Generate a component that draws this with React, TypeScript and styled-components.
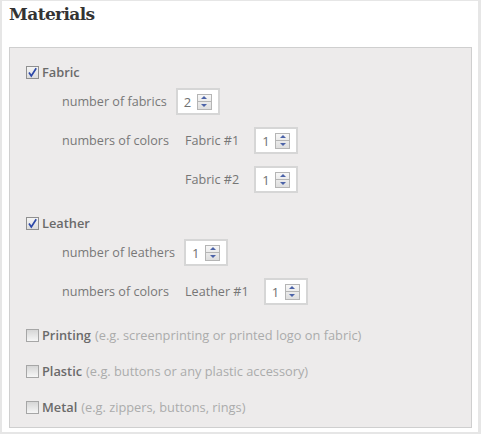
import React from 'react';
import styled, { createGlobalStyle } from 'styled-components';

const GlobalStyle = createGlobalStyle`
  html, body {
    margin: 0;
    padding: 0;
    background: #ffffff;
  }
  body {
    font-family: 'Open Sans', 'DejaVu Sans', sans-serif;
  }
`;

const Frame = styled.div`
  box-sizing: border-box;
  width: 481px;
  height: 434px;
  border: 2px solid #e6e6e6;
  border-top-width: 1px;
  border-right-width: 3px;
  background: #fff;
  padding: 0 6px 0 7px;
`;

const Title = styled.h2`
  margin: 0;
  padding-top: 3px;
  height: 46px;
  box-sizing: border-box;
  font-family: 'DejaVu Serif', 'Liberation Serif', serif;
  font-weight: bold;
  font-size: 17px;
  letter-spacing: -0.6px;
  color: #333;
`;

const Panel = styled.div`
  box-sizing: border-box;
  height: 381px;
  border: 1px solid #cfcfcf;
  background: #edebeb;
  padding: 16px 16px 0;
  display: flex;
  flex-direction: column;
  gap: 20px;
`;

const Section = styled.div<{ $extra?: number }>`
  display: flex;
  flex-direction: column;
  margin-bottom: ${p => p.$extra || 0}px;
`;

const CheckRow = styled.label`
  display: flex;
  align-items: center;
  height: 16px;
  font-size: 12.8px;
  color: #6c6c6c;
`;

const Box = styled.span<{ $checked?: boolean }>`
  box-sizing: border-box;
  width: 13px;
  height: 13px;
  margin-right: 3px;
  border: 1px solid ${p => (p.$checked ? '#8f8f8f' : '#a6a6a6')};
  background: ${p =>
    p.$checked ? 'linear-gradient(#f4f4f4, #dcdcdc)' : 'linear-gradient(#d6d6d6, #f6f6f6)'};
  display: flex;
  align-items: center;
  justify-content: center;
`;

const CheckName = styled.span`
  font-weight: 600;
  color: #6a6a6a;
`;

const Hint = styled.span`
  margin-left: 4px;
  color: #ababab;
`;

const SubList = styled.div`
  display: flex;
  flex-direction: column;
  gap: 12px;
  margin-top: 8px;
  padding-left: 36px;
`;

const SubRow = styled.div`
  display: flex;
  align-items: flex-start;
  font-size: 12.6px;
  color: #787878;
`;

const RowLabel = styled.span<{ $width?: number; $gap?: number }>`
  height: 27px;
  line-height: 27px;
  width: ${p => (p.$width ? `${p.$width}px` : 'auto')};
  margin-right: ${p => p.$gap || 0}px;
  flex: none;
`;

const ColorList = styled.div`
  display: flex;
  flex-direction: column;
  gap: 12px;
`;

const ColorItem = styled.div`
  display: flex;
  align-items: center;
`;

const ItemLabel = styled.span`
  margin-right: 15px;
  color: #767676;
`;

const NumberBox = styled.div`
  box-sizing: border-box;
  width: 44px;
  height: 27px;
  border: 2px solid #d6d6d6;
  background: #fff;
  display: flex;
  align-items: center;
  padding: 0 6px;
  justify-content: space-between;
  font-size: 13px;
`;

const Digit = styled.span`
  color: #707070;
`;

const Spinner = styled.div`
  box-sizing: border-box;
  width: 15px;
  height: 16px;
  border: 1px solid #b5b5b5;
  background: linear-gradient(#f7f7f7, #dedede);
  display: flex;
  flex-direction: column;
`;

const SpinHalf = styled.span<{ $bottom?: boolean }>`
  flex: 1;
  display: flex;
  align-items: center;
  justify-content: center;
  border-top: ${p => (p.$bottom ? '1px solid #b5b5b5' : 'none')};
`;

const Arrow = styled.span<{ $down?: boolean }>`
  width: 0;
  height: 0;
  border-left: 3px solid transparent;
  border-right: 3px solid transparent;
  ${p => (p.$down ? 'border-top: 3px solid #4c63a8;' : 'border-bottom: 3px solid #4c63a8;')}
`;

const CheckMark = () => (
  <svg width="11" height="11" viewBox="0 0 11 11">
    <path d="M2 5.5 L4.3 9 L9.2 1.3" fill="none" stroke="#2c48a8" strokeWidth="1.7" />
  </svg>
);

const Stepper = ({ value }: { value: number }) => (
  <NumberBox>
    <Digit>{value}</Digit>
    <Spinner>
      <SpinHalf>
        <Arrow />
      </SpinHalf>
      <SpinHalf $bottom>
        <Arrow $down />
      </SpinHalf>
    </Spinner>
  </NumberBox>
);

const Check = ({ name, hint, checked }: { name: string; hint?: string; checked?: boolean }) => (
  <CheckRow>
    <Box $checked={checked}>{checked && <CheckMark />}</Box>
    <CheckName>{name}</CheckName>
    {hint && <Hint>{hint}</Hint>}
  </CheckRow>
);

const MATERIALS = [
  { name: 'Fabric', plural: 'fabrics', count: 2 },
  { name: 'Leather', plural: 'leathers', count: 1 },
];

const EXTRAS = [
  { name: 'Printing', hint: '(e.g. screenprinting or printed logo on fabric)' },
  { name: 'Plastic', hint: '(e.g. buttons or any plastic accessory)' },
  { name: 'Metal', hint: '(e.g. zippers, buttons, rings)' },
];

export default function App() {
  return (
    <>
      <GlobalStyle />
      <Frame>
        <Title>Materials</Title>
        <Panel>
          {MATERIALS.map(m => (
            <Section key={m.name} $extra={2}>
              <Check name={m.name} checked />
              <SubList>
                <SubRow>
                  <RowLabel $gap={9}>number of {m.plural}</RowLabel>
                  <Stepper value={m.count} />
                </SubRow>
                <SubRow>
                  <RowLabel $width={123}>numbers of colors</RowLabel>
                  <ColorList>
                    {Array.from({ length: m.count }).map((_, i) => (
                      <ColorItem key={i}>
                        <ItemLabel>
                          {m.name} #{i + 1}
                        </ItemLabel>
                        <Stepper value={1} />
                      </ColorItem>
                    ))}
                  </ColorList>
                </SubRow>
              </SubList>
            </Section>
          ))}
          {EXTRAS.map(e => (
            <Section key={e.name}>
              <Check name={e.name} hint={e.hint} />
            </Section>
          ))}
        </Panel>
      </Frame>
    </>
  );
}
